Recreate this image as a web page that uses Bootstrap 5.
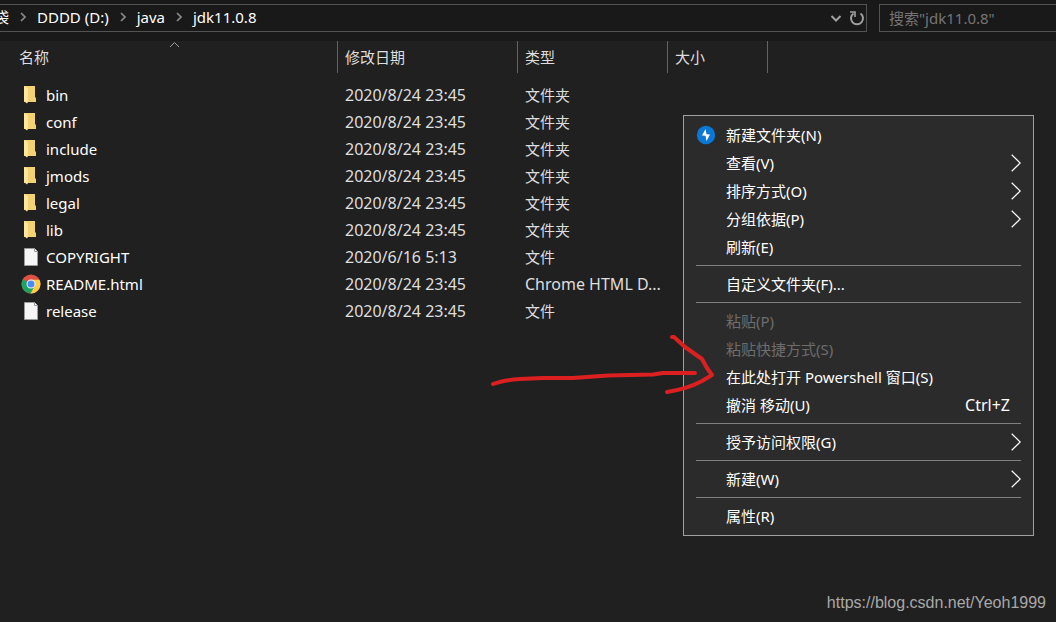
<!DOCTYPE html>
<html lang="zh-CN">
<head>
<meta charset="utf-8">
<meta name="viewport" content="width=device-width, initial-scale=1">
<title>jdk11.0.8</title>
<link href="https://cdn.jsdelivr.net/npm/bootstrap@5.3.0/dist/css/bootstrap.min.css" rel="stylesheet">
<style>
  body { background: #202020; color: #dedede; font: 15px/20px "Noto Sans", "Noto Sans CJK SC", sans-serif; overflow: hidden; }
  button { background: none; border: 0; color: inherit; font: inherit; padding: 0; }
  svg { display: block; flex: none; }
  .topbar { background: #191919; height: 41px; padding: 4px 0 9px; gap: 12px; }
  .address { border: 1px solid #535353; border-left: 0; color: #fff; height: 28px; }
  .clipped { width: 9px; overflow: hidden; justify-content: flex-end; }
  .crumbs { gap: 11px; padding-bottom: 2px; }
  .search { width: 177px; height: 28px; border: 1px solid #535353; border-right: 0; background: #191919; color: #ddd; padding: 0 9px; outline: 0; }
  .search::placeholder { color: #757575; opacity: 1; }
  .files { width: 768px; table-layout: fixed; border-collapse: separate; border-spacing: 0; }
  .files th { height: 32px; font-weight: 400; border-right: 1px solid #636363; padding: 0 7px; position: relative; }
  .files th:first-child { padding-left: 19px; }
  .files td { height: 27px; padding: 0 7px; white-space: nowrap; overflow: hidden; }
  .files td:first-child { padding-left: 21px; color: #fff; }
  .files tbody::before { content: ""; display: block; height: 8px; }
  .sort { position: absolute; left: 169px; top: 0; }
  .file { gap: 5px; }
  .wide-text { font-size: 16px; }
  .ctx { position: absolute; top: 115px; right: 22px; width: 351px; background: #2b2b2b; border: 1px solid #a0a0a0; padding: 5px 12px; color: #fff; }
  .ctx button { display: flex; align-items: center; width: 100%; height: 28px; text-align: left; }
  .ctx .slot { width: 30px; flex: none; }
  .ctx button:disabled { color: #6d6d6d; }
  .ctx hr { margin: 4px 0; border-top: 1px solid #808080; opacity: 1; }
  .keys { margin-right: 11px; }
  .pen { position: absolute; top: 215px; left: -196px; pointer-events: none; }
  .source-link { position: absolute; right: 10px; bottom: 9px; font: 16px/20px "Liberation Sans", sans-serif; color: #a9a9a9; text-decoration: none; }
</style>
<script src="https://cdn.jsdelivr.net/npm/bootstrap@5.3.0/dist/js/bootstrap.bundle.min.js"></script>
</head>
<body class="vh-100 position-relative">
<svg width="0" height="0" class="position-absolute" aria-hidden="true">
  <symbol id="folder" viewBox="0 0 20 20"><path d="M3 1h11v11l1 1v4H3z" fill="#f5d271"/><path d="M3 1l4 2v14l-1 1.500-3-2.500z" fill="#ffe6a0"/></symbol>
  <symbol id="page" viewBox="0 0 20 20"><path d="M3.500 1.500h10l3 3v14h-13z" fill="#f6f6f6" stroke="#9a9a9a"/><path d="M13.500 1.500v3h3" fill="#fff" stroke="#9a9a9a"/></symbol>
  <symbol id="chrome" viewBox="0 0 20 20"><circle cx="10" cy="10" r="9.500" fill="#dd5144"/><path d="M10 10L1.800 5.200A9.500 9.500 0 0 0 9.500 19.500L14 12z" fill="#1da462"/><path d="M10 5.800h8.500A9.500 9.500 0 0 1 9.500 19.500L13.800 12z" fill="#ffcd46"/><circle cx="10" cy="10" r="4.500" fill="#f1f1f1"/><circle cx="10" cy="10" r="3.500" fill="#4c8bf5"/></symbol>
  <symbol id="crumb" viewBox="0 0 6 10"><path d="M1 1l4 4-4 4" fill="none" stroke="#8c8c8c" stroke-width="1.600"/></symbol>
  <symbol id="more" viewBox="0 0 10 18"><path d="M.7.700L9.200 9 .7 17.300" fill="none" stroke="#fff" stroke-width="1.200"/></symbol>
</svg>

<header class="topbar d-flex">
  <nav class="address d-flex align-items-center flex-grow-1" aria-label="地址">
    <div class="crumbs d-flex align-items-center flex-grow-1">
      <button class="clipped d-flex" type="button"><span>袋</span></button>
      <svg width="6" height="10"><use href="#crumb"/></svg>
      <button type="button">DDDD (D:)</button>
      <svg width="6" height="10"><use href="#crumb"/></svg>
      <button type="button">java</button>
      <svg width="6" height="10"><use href="#crumb"/></svg>
      <button type="button">jdk11.0.8</button>
    </div>
    <button type="button" aria-label="历史记录" class="me-1"><svg width="14" height="10" viewBox="0 0 14 10"><path d="M1.500 3L6 7.500 10.500 3" fill="none" stroke="#a0a0a0" stroke-width="2"/></svg></button>
    <button type="button" aria-label="刷新"><svg width="18" height="18" viewBox="0 0 18 18"><path d="M5.500 4.500A6 6 0 1 0 12.500 4.500" fill="none" stroke="#a0a0a0" stroke-width="2"/><path d="M2 3h5v5" fill="none" stroke="#a0a0a0" stroke-width="1.600"/></svg></button>
  </nav>
  <input class="search" type="text" placeholder='搜索"jdk11.0.8"' aria-label="搜索">
</header>

<main>
  <table class="files">
    <colgroup><col style="width:338px"><col style="width:180px"><col style="width:150px"><col style="width:100px"></colgroup>
    <thead><tr>
      <th>名称<svg class="sort" width="11" height="7" viewBox="0 0 11 7"><path d="M1 6l4.500-4.500L10 6" fill="none" stroke="#a0a0a0"/></svg></th>
      <th>修改日期</th><th>类型</th><th>大小</th>
    </tr></thead>
    <tbody>
      <tr><td><div class="file d-flex align-items-center"><svg width="20" height="20"><use href="#folder"/></svg>bin</div></td><td class="wide-text">2020/8/24 23:45</td><td>文件夹</td><td></td></tr>
      <tr><td><div class="file d-flex align-items-center"><svg width="20" height="20"><use href="#folder"/></svg>conf</div></td><td class="wide-text">2020/8/24 23:45</td><td>文件夹</td><td></td></tr>
      <tr><td><div class="file d-flex align-items-center"><svg width="20" height="20"><use href="#folder"/></svg>include</div></td><td class="wide-text">2020/8/24 23:45</td><td>文件夹</td><td></td></tr>
      <tr><td><div class="file d-flex align-items-center"><svg width="20" height="20"><use href="#folder"/></svg>jmods</div></td><td class="wide-text">2020/8/24 23:45</td><td>文件夹</td><td></td></tr>
      <tr><td><div class="file d-flex align-items-center"><svg width="20" height="20"><use href="#folder"/></svg>legal</div></td><td class="wide-text">2020/8/24 23:45</td><td>文件夹</td><td></td></tr>
      <tr><td><div class="file d-flex align-items-center"><svg width="20" height="20"><use href="#folder"/></svg>lib</div></td><td class="wide-text">2020/8/24 23:45</td><td>文件夹</td><td></td></tr>
      <tr><td><div class="file d-flex align-items-center"><svg width="20" height="20"><use href="#page"/></svg>COPYRIGHT</div></td><td class="wide-text">2020/6/16 5:13</td><td>文件</td><td></td></tr>
      <tr><td><div class="file d-flex align-items-center"><svg width="20" height="20"><use href="#chrome"/></svg>README.html</div></td><td class="wide-text">2020/8/24 23:45</td><td class="wide-text">Chrome HTML D...</td><td></td></tr>
      <tr><td><div class="file d-flex align-items-center"><svg width="20" height="20"><use href="#page"/></svg>release</div></td><td class="wide-text">2020/8/24 23:45</td><td>文件</td><td></td></tr>
    </tbody>
  </table>
</main>

<div class="ctx">
  <button type="button"><span class="slot"><svg width="20" height="20" viewBox="0 0 20 20"><circle cx="10" cy="10" r="9.200" fill="#0b78d6"/><path d="M9.500 4L6 10.500l3.500.3L10.500 16 14 9.500l-3.500-.3z" fill="#fff"/></svg></span>新建文件夹(N)</button>
  <button type="button"><span class="slot"></span>查看(V)<svg class="ms-auto" width="10" height="18"><use href="#more"/></svg></button>
  <button type="button"><span class="slot"></span>排序方式(O)<svg class="ms-auto" width="10" height="18"><use href="#more"/></svg></button>
  <button type="button"><span class="slot"></span>分组依据(P)<svg class="ms-auto" width="10" height="18"><use href="#more"/></svg></button>
  <button type="button"><span class="slot"></span>刷新(E)</button>
  <hr>
  <button type="button"><span class="slot"></span>自定义文件夹(F)...</button>
  <hr>
  <button type="button" disabled><span class="slot"></span>粘贴(P)</button>
  <button type="button" disabled><span class="slot"></span>粘贴快捷方式(S)</button>
  <button type="button"><span class="slot"></span>在此处打开 Powershell 窗口(S)</button>
  <button type="button"><span class="slot"></span>撤消 移动(U)<span class="keys wide-text ms-auto">Ctrl+Z</span></button>
  <hr>
  <button type="button"><span class="slot"></span>授予访问权限(G)<svg class="ms-auto" width="10" height="18"><use href="#more"/></svg></button>
  <hr>
  <button type="button"><span class="slot"></span>新建(W)<svg class="ms-auto" width="10" height="18"><use href="#more"/></svg></button>
  <hr>
  <button type="button"><span class="slot"></span>属性(R)</button>
  <svg class="pen" width="230" height="70" viewBox="0 0 230 70" fill="none" stroke="#dc2021" stroke-width="4" stroke-linecap="round" stroke-linejoin="round"><path d="M5 53Q15 49 32 48L55 47H85L120 44.500 165 43.500 175 42H207"/><path d="M184 6H186L197 16 214 28 219 37 224 44 214 50Q199 58 179 61"/></svg>
</div>

<a class="source-link" href="https://blog.csdn.net/Yeoh1999">https://blog.csdn.net/Yeoh1999</a>
</body>
</html>
